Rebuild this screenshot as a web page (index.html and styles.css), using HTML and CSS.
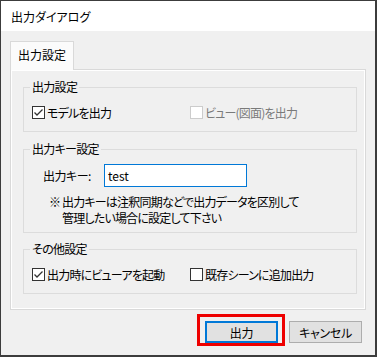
FILE: index.html
```html
<!DOCTYPE html>
<html lang="ja">
<head>
<meta charset="utf-8">
<title>出力ダイアログ</title>
<link rel="stylesheet" href="styles.css">
</head>
<body>
<div class="window">
  <div class="titlebar">出力ダイアログ</div>
  <div class="client">
    <div class="tabs"><div class="tab">出力設定</div></div>
    <div class="panel">
      <fieldset class="group">
        <legend>出力設定</legend>
        <div class="checks">
          <label class="check"><span class="box"><svg viewBox="0 0 13 13" width="13" height="13"><polyline points="2.5,6.5 5,9 10.5,3.5" /></svg></span>モデルを出力</label>
          <label class="check disabled"><span class="box"></span>ビュー(図面)を出力</label>
        </div>
      </fieldset>
      <fieldset class="group key">
        <legend>出力キー設定</legend>
        <div class="keybody">
          <div class="keyrow">
            <span class="keylabel">出力キー:</span>
            <span class="input">test</span>
          </div>
          <div class="note">
            <span class="mark">※</span>
            <span class="notetext">出力キーは注釈同期などで出力データを区別して<br>管理したい場合に設定して下さい</span>
          </div>
        </div>
      </fieldset>
      <fieldset class="group other">
        <legend>その他設定</legend>
        <div class="checks">
          <label class="check"><span class="box"><svg viewBox="0 0 13 13" width="13" height="13"><polyline points="2.5,6.5 5,9 10.5,3.5" /></svg></span>出力時にビューアを起動</label>
          <label class="check"><span class="box"></span>既存シーンに追加出力</label>
        </div>
      </fieldset>
    </div>
    <div class="buttons">
      <span class="highlight"><span class="btn default">出力</span></span>
      <span class="btn">キャンセル</span>
    </div>
  </div>
</div>
</body>
</html>
```

FILE: styles.css
```css
html, body {
  margin: 0;
  padding: 0;
}
body {
  background: #3c3c3c;
  width: 377px;
  height: 357px;
  overflow: hidden;
  font-family: "Noto Sans CJK JP", "Noto Sans", sans-serif;
  font-size: 12px;
  font-feature-settings: "palt" 1;
  color: #000;
}
.window {
  margin: 1px 0 0 1px;
  width: 374px;
  height: 354px;
  background: #f0f0f0;
  display: flex;
  flex-direction: column;
}
.titlebar {
  height: 30px;
  line-height: 30px;
  padding-left: 10px;
  background: #fff;
  box-sizing: border-box;
  padding-top: 1px;
}
.client {
  padding: 10px 9px 0 9px;
  display: flex;
  flex-direction: column;
}
.tabs {
  display: flex;
}
.tab {
  position: relative;
  z-index: 1;
  width: 64px;
  height: 29px;
  box-sizing: border-box;
  border: 1px solid #d9d9d9;
  border-bottom: none;
  background: #fbfbfb;
  padding-left: 7px;
  line-height: 26px;
  margin-bottom: -1px;
}
.panel {
  border: 1px solid #d9d9d9;
  box-shadow: inset 1px 1px 0 #fff, inset -1px -1px 0 #fff;
  padding: 9px 8px 15px 12px;
  display: flex;
  flex-direction: column;
}
.group {
  margin: 0;
  padding: 0;
  border: 1px solid #dcdcdc;
  min-width: 0;
}
.group legend {
  margin-left: 6px;
  padding: 0 2px;
  line-height: 16px;
  letter-spacing: -0.7px;
}
.group.key {
  margin-top: 9px;
}
.group.other {
  margin-top: 8px;
}
.checks {
  display: grid;
  grid-template-columns: 158px 1fr;
  padding: 7px 0 9px 8px;
}
.check {
  display: flex;
  align-items: center;
  height: 20px;
  gap: 2px;
  letter-spacing: -0.8px;
}
.box {
  width: 13px;
  height: 13px;
  box-sizing: border-box;
  border: 1px solid #333;
  background: #fff;
  position: relative;
  flex: none;
}
.box svg {
  position: absolute;
  left: -1px;
  top: -1px;
}
.box polyline {
  fill: none;
  stroke: #333;
  stroke-width: 1.3;
}
.check.disabled {
  color: #7a7a7a;
}
.check.disabled .box {
  border-color: #cccccc;
}
.keybody {
  padding: 7px 0 6px 0;
}
.keyrow {
  display: flex;
  align-items: center;
  padding-left: 19px;
}
.keylabel {
  width: 61px;
  letter-spacing: -0.5px;
}
.input {
  width: 143px;
  height: 23px;
  box-sizing: border-box;
  border: 1px solid #0078d7;
  background: #fff;
  padding-left: 3px;
  line-height: 21px;
}
.note {
  display: flex;
  margin-top: 7px;
  padding-left: 25px;
  line-height: 16px;
}
.mark {
  width: 13px;
  flex: none;
}
.notetext {
  letter-spacing: -0.8px;
}
.buttons {
  display: flex;
  justify-content: flex-end;
  align-items: flex-start;
  gap: 4px;
  margin-top: 4px;
  padding-right: 4px;
}
.highlight {
  display: flex;
  border: 3px solid #ee0000;
  padding: 4px 4px 0 5px;
}
.btn {
  width: 73px;
  height: 22px;
  box-sizing: border-box;
  border: 1px solid #adadad;
  background: #e1e1e1;
  display: flex;
  align-items: center;
  justify-content: center;
  margin-top: 7px;
  letter-spacing: -0.3px;
}
.highlight .btn {
  margin-top: 0;
}
.btn.default {
  border: 2px solid #0078d7;
}
```
